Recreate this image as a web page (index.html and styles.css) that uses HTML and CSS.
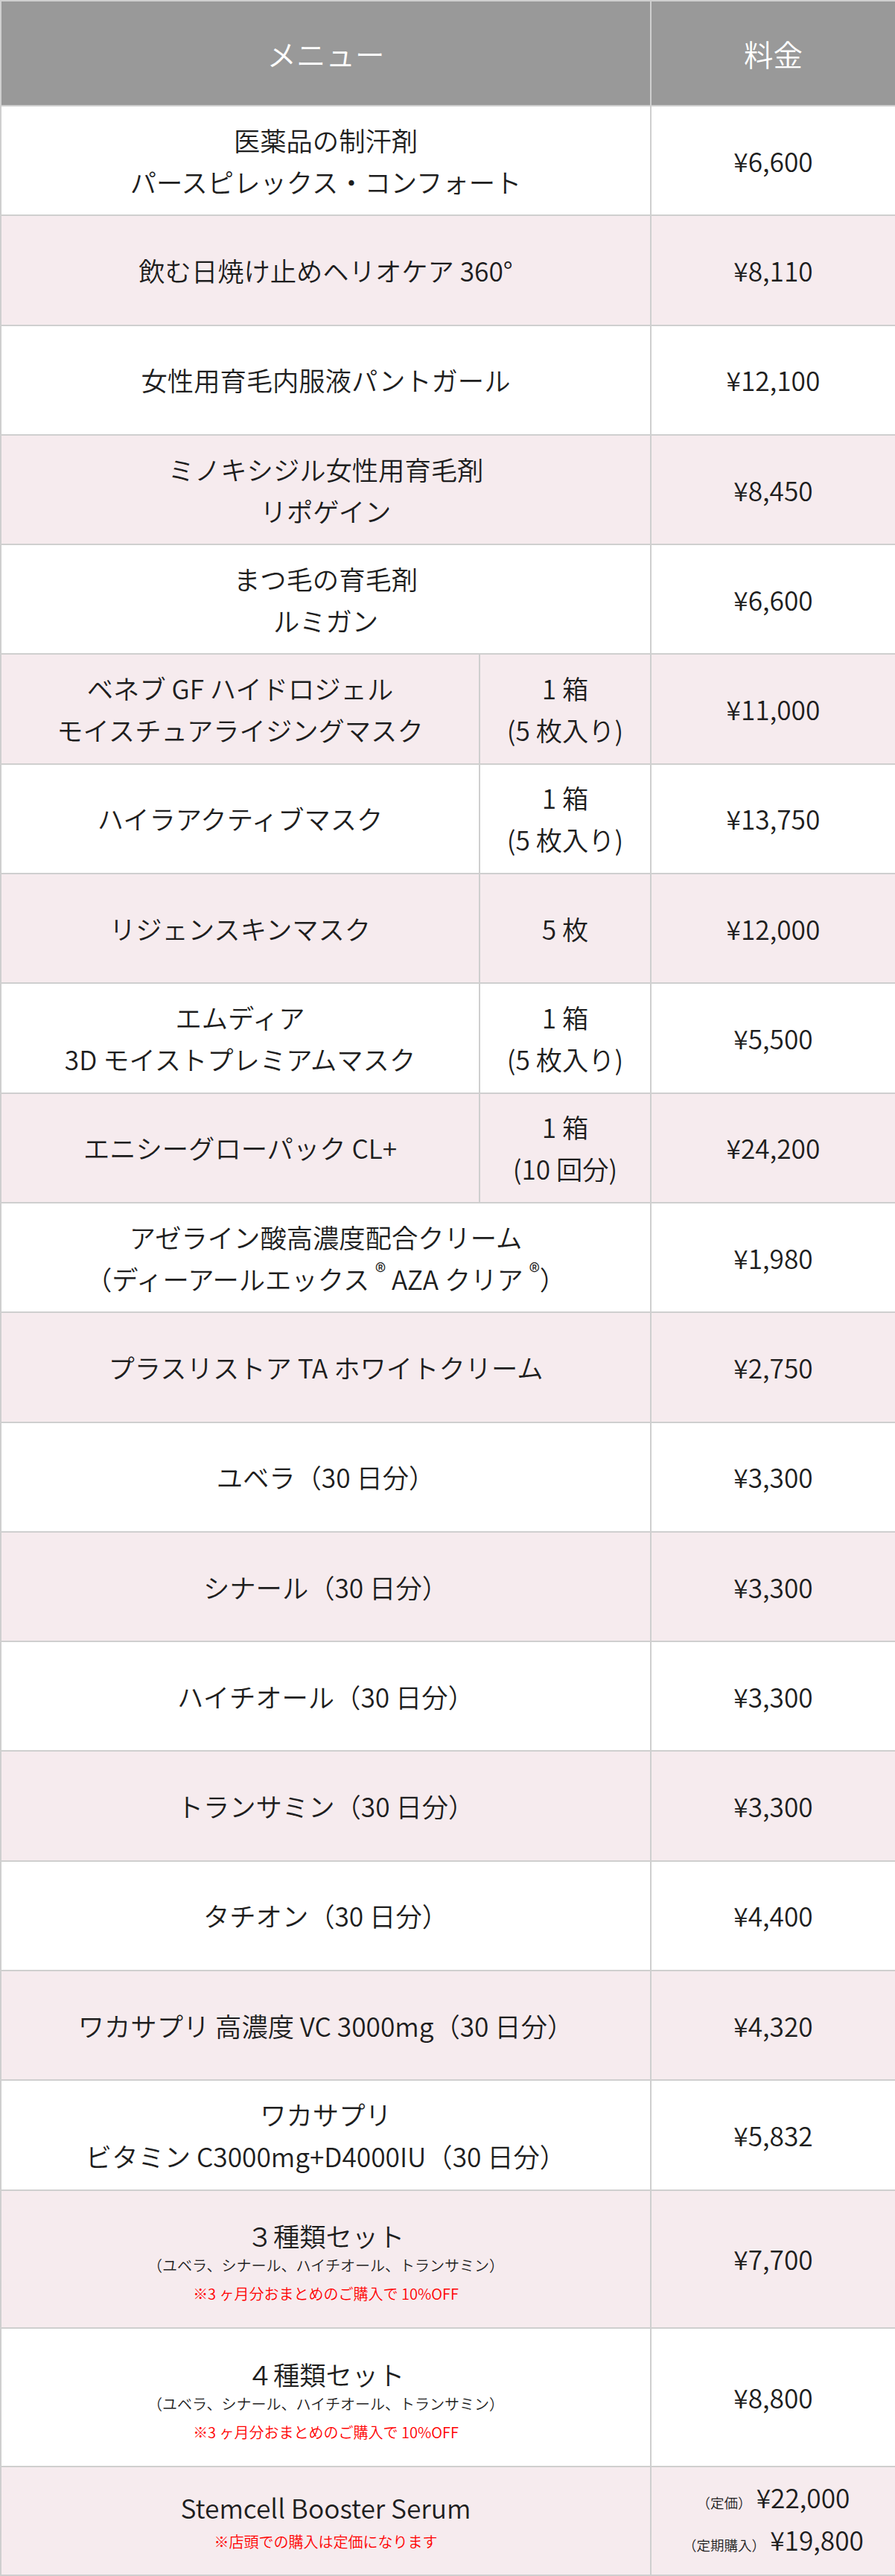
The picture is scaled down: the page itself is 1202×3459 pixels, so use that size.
FILE: index.html
```html
<!DOCTYPE html>
<html lang="ja">
<head>
    <meta charset="UTF-8">
    <meta name="viewport" content="width=device-width, initial-scale=1.0">
    <title>料金表</title>
    <link rel="stylesheet" href="styles.css">
</head>
<body>
    <table class="price-table">
        <colgroup>
            <col class="col-name">
            <col class="col-qty">
            <col class="col-price">
        </colgroup>
        <thead>
            <tr>
                <th colspan="2">メニュー</th>
                <th>料金</th>
            </tr>
        </thead>
        <tbody>
            <tr><td colspan="2">医薬品の制汗剤<br>パースピレックス・コンフォート</td><td>¥6,600</td></tr>
            <tr><td colspan="2">飲む日焼け止めヘリオケア 360°</td><td>¥8,110</td></tr>
            <tr><td colspan="2">女性用育毛内服液パントガール</td><td>¥12,100</td></tr>
            <tr><td colspan="2">ミノキシジル女性用育毛剤<br>リポゲイン</td><td>¥8,450</td></tr>
            <tr><td colspan="2">まつ毛の育毛剤<br>ルミガン</td><td>¥6,600</td></tr>

            <!-- マスク類（数量あり） -->
            <tr><td>ベネブ GF ハイドロジェル<br>モイスチュアライジングマスク</td><td>1 箱<br>(5 枚入り)</td><td>¥11,000</td></tr>
            <tr><td>ハイラアクティブマスク</td><td>1 箱<br>(5 枚入り)</td><td>¥13,750</td></tr>
            <tr><td>リジェンスキンマスク</td><td>5 枚</td><td>¥12,000</td></tr>
            <tr><td>エムディア<br>3D モイストプレミアムマスク</td><td>1 箱<br>(5 枚入り)</td><td>¥5,500</td></tr>
            <tr><td>エニシーグローパック CL+</td><td>1 箱<br>(10 回分)</td><td>¥24,200</td></tr>

            <tr><td colspan="2">アゼライン酸高濃度配合クリーム<br>（ディーアールエックス <sup>®</sup> AZA クリア <sup>®</sup>）</td><td>¥1,980</td></tr>
            <tr><td colspan="2">プラスリストア TA ホワイトクリーム</td><td>¥2,750</td></tr>
            <tr><td colspan="2">ユベラ（30 日分）</td><td>¥3,300</td></tr>
            <tr><td colspan="2">シナール（30 日分）</td><td>¥3,300</td></tr>
            <tr><td colspan="2">ハイチオール（30 日分）</td><td>¥3,300</td></tr>
            <tr><td colspan="2">トランサミン（30 日分）</td><td>¥3,300</td></tr>
            <tr><td colspan="2">タチオン（30 日分）</td><td>¥4,400</td></tr>
            <tr><td colspan="2">ワカサプリ 高濃度 VC 3000mg（30 日分）</td><td>¥4,320</td></tr>
            <tr><td colspan="2">ワカサプリ<br>ビタミン C3000mg+D4000IU（30 日分）</td><td>¥5,832</td></tr>

            <!-- セット -->
            <tr class="row-set">
                <td colspan="2">
                    <div class="set-title">３種類セット</div>
                    <div class="set-items">（ユベラ、シナール、ハイチオール、トランサミン）</div>
                    <div class="note">※3 ヶ月分おまとめのご購入で 10%OFF</div>
                </td>
                <td>¥7,700</td>
            </tr>
            <tr class="row-set">
                <td colspan="2">
                    <div class="set-title">４種類セット</div>
                    <div class="set-items">（ユベラ、シナール、ハイチオール、トランサミン）</div>
                    <div class="note">※3 ヶ月分おまとめのご購入で 10%OFF</div>
                </td>
                <td>¥8,800</td>
            </tr>
            <tr class="row-last">
                <td colspan="2">
                    <div class="set-title">Stemcell Booster Serum</div>
                    <div class="note note-shop">※店頭での購入は定価になります</div>
                </td>
                <td class="price-multi">
                    <div><span class="price-label">（定価）</span>¥22,000</div>
                    <div><span class="price-label">（定期購入）</span>¥19,800</div>
                </td>
            </tr>
        </tbody>
    </table>
</body>
</html>
```

FILE: styles.css
```css
body {
    margin: 0;
    font-family: "Noto Sans CJK JP", sans-serif;
    font-weight: 350;
    color: #1e1e1e;
}
.price-table {
    width: 1202px;
    border-collapse: collapse;
    table-layout: fixed;
    font-size: 35.3px;
    line-height: 56px;
    text-align: center;
}
.col-name {
    width: 643px;
}
.col-qty {
    width: 230px;
}
.col-price {
    width: 329px;
}
.price-table th,
.price-table td {
    border: 2px solid #cfcfcf;
    padding: 0 8px;
    vertical-align: middle;
}
.price-table thead th {
    height: 139px;
    background-color: #999;
    color: #fff;
    font-weight: 350;
    font-size: 39.5px;
}
.price-table tbody tr {
    height: 147.3px;
}
.price-table tbody tr:nth-child(even) {
    background-color: #f6ebee;
}
.price-table tbody tr.row-set {
    height: 185.5px;
}
.price-table tbody tr.row-last {
    height: 146px;
}
sup {
    font-size: 0.85em;
    line-height: 0;
}
.set-items {
    font-size: 20px;
    line-height: 24px;
}
.note {
    margin-top: 14px;
    font-size: 20px;
    line-height: 24px;
    color: #ff0000;
}
.note-shop {
    margin-top: 0;
    line-height: 36px;
}
.price-multi {
    line-height: 50px;
}
.price-label {
    font-size: 18.5px;
    margin-right: 6px;
}
```
